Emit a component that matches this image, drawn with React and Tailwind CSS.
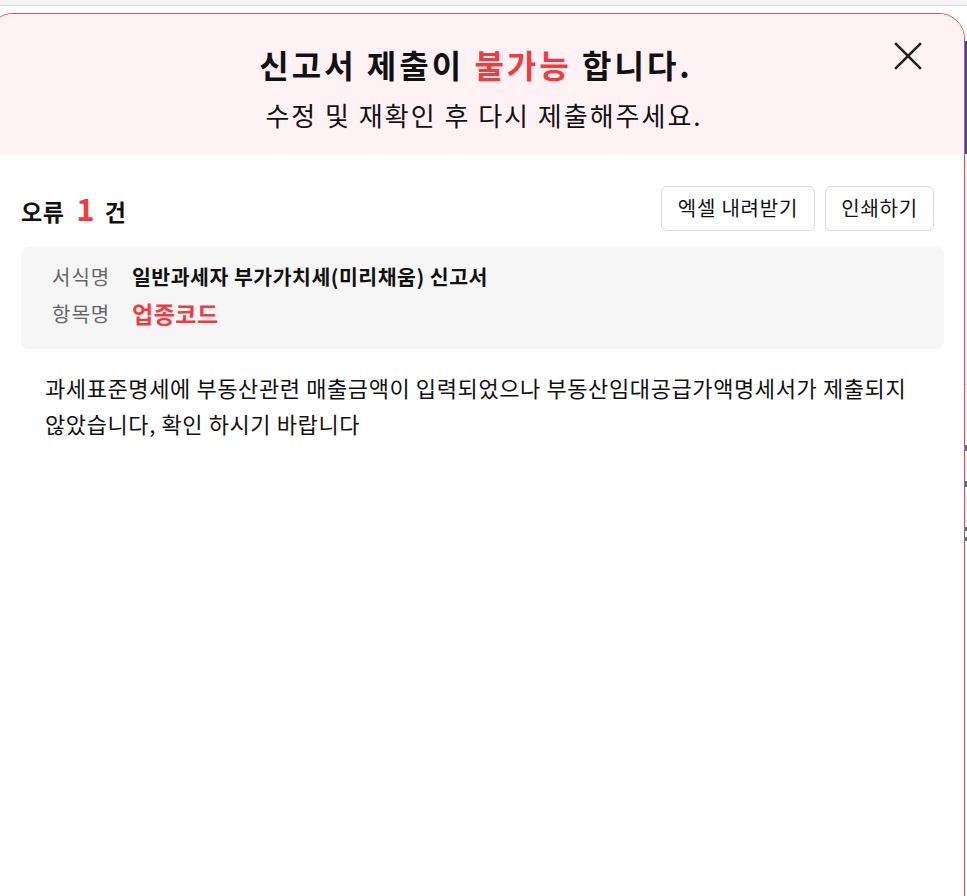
import React from "react";

const FONT = { fontFamily: '"Noto Sans CJK KR", "Noto Sans", sans-serif' };

function CloseIcon() {
  return (
    <svg width="28" height="28" viewBox="0 0 28 28" fill="none" stroke="#222" strokeWidth="2.6" strokeLinecap="square">
      <line x1="2" y1="2" x2="26" y2="26" />
      <line x1="26" y1="2" x2="2" y2="26" />
    </svg>
  );
}

export default function App() {
  return (
    <div className="w-[967px] h-[896px] overflow-hidden bg-white text-[#111]" style={FONT}>
      <div className="h-[6px] bg-[#f3f3f3] border-b border-[#dddddd]" />
      <div className="flex h-[890px] pt-[7px]">
        <div className="w-[978px] -ml-[13px] shrink-0 h-[900px] rounded-t-[26px] border border-[#f0474c] overflow-hidden bg-white flex flex-col">
          <div className="relative bg-[#fff2f5] h-[141px] flex flex-col items-center pt-[27px]">
            <h1 className="text-[32px] font-bold leading-[46px] tracking-[3px]">
              신고서 제출이 <span className="text-[#f23b3f]">불가능</span> 합니다.
            </h1>
            <p className="text-[26px] leading-[38px] mt-[9px] ml-[16px] tracking-[2px]">수정 및 재확인 후 다시 제출해주세요.</p>
            <button className="absolute right-[42px] top-[28px] p-0">
              <CloseIcon />
            </button>
          </div>
          <div className="pl-[33px] pr-[20px] pt-[30px]">
            <div className="flex items-center justify-between pr-[10px]">
              <div className="flex items-baseline font-bold">
                <span className="text-[23px] tracking-[0.5px]">오류</span>
                <span className="text-[31px] text-[#f23b3f] ml-[12px] mr-[10px]">1</span>
                <span className="text-[23px]">건</span>
              </div>
              <div className="flex gap-[10px]">
                <button className="h-[45px] px-[16px] rounded-[6px] border border-[#d9d9d9] bg-white text-[20px] tracking-[0.8px]">엑셀 내려받기</button>
                <button className="h-[45px] px-[15px] rounded-[6px] border border-[#d9d9d9] bg-white text-[20px] tracking-[0.8px]">인쇄하기</button>
              </div>
            </div>
            <div className="mt-[15px] bg-[#f6f6f6] rounded-[8px] h-[102px] pl-[31px] pt-[14px] flex flex-col gap-[5px]">
              <div className="flex items-center h-[32px]">
                <span className="w-[80px] text-[20px] tracking-[1px] text-[#666]">서식명</span>
                <span className="text-[20.5px] tracking-[0.5px] font-bold">일반과세자 부가가치세(미리채움) 신고서</span>
              </div>
              <div className="flex items-center h-[32px]">
                <span className="w-[80px] text-[20px] tracking-[1px] text-[#666]">항목명</span>
                <span className="text-[23px] tracking-[0.5px] font-bold text-[#f23b3f]">업종코드</span>
              </div>
            </div>
            <p className="mt-[20px] pl-[24px] text-[22px] tracking-[0.6px] leading-[36px]">
              과세표준명세에 부동산관련 매출금액이 입력되었으나 부동산임대공급가액명세서가 제출되지
              <br />
              않았습니다, 확인 하시기 바랍니다
            </p>
          </div>
        </div>
        <div className="w-[3px] shrink-0 flex flex-col">
          <div className="h-[28px] bg-white" />
          <div className="h-[113px] bg-[#2a4da6]" />
          <div className="h-[230px] bg-[#f3f5f8]" />
          <div className="h-[1px] bg-[#cfd6e0]" />
          <div className="h-[60px] bg-[#f3f5f8]" />
          <div className="h-[6px] bg-[#1f8a8a]" />
          <div className="h-[30px] bg-[#f3f5f8]" />
          <div className="h-[6px] bg-[#1f8a8a]" />
          <div className="h-[40px] bg-[#f3f5f8]" />
          <div className="h-[4px] bg-[#1f8a8a]" />
          <div className="h-[6px] bg-[#f3f5f8]" />
          <div className="h-[4px] bg-[#1f8a8a]" />
          <div className="flex-1 bg-white" />
        </div>
      </div>
    </div>
  );
}
